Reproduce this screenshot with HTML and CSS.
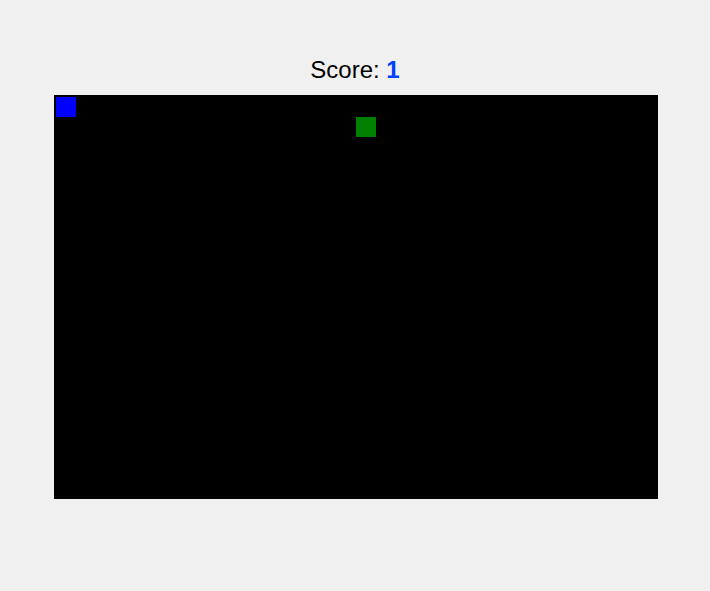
FILE: index.html
```html
<!DOCTYPE html>
<html>
<head>
<meta charset="utf-8">
<title>Snake</title>
<link rel="stylesheet" href="styles.css">
</head>
<body>
<div class="game">
  <div class="score">Score: <span class="score-value">1</span></div>
  <div class="board">
    <div class="cell snake" style="left:0px;top:0px"></div>
    <div class="cell food" style="left:300px;top:20px"></div>
  </div>
</div>
</body>
</html>
```
FILE: styles.css
```css
html, body {
  margin: 0;
  padding: 0;
  background: #f0f0f0;
}
.game {
  display: flex;
  flex-direction: column;
  align-items: center;
  padding-top: 56px;
  gap: 11px;
  font-family: "Liberation Sans", Arial, sans-serif;
}
.score {
  font-size: 24px;
  line-height: 28px;
  color: #000;
}
.score-value {
  color: #0040ff;
  font-weight: bold;
}
.board {
  position: relative;
  width: 600px;
  height: 400px;
  background: #000;
  border: 2px solid #000;
  margin-left: 2px;
}
.cell {
  position: absolute;
  width: 20px;
  height: 20px;
}
.snake {
  background: #0000ff;
}
.food {
  background: #008000;
}
```
